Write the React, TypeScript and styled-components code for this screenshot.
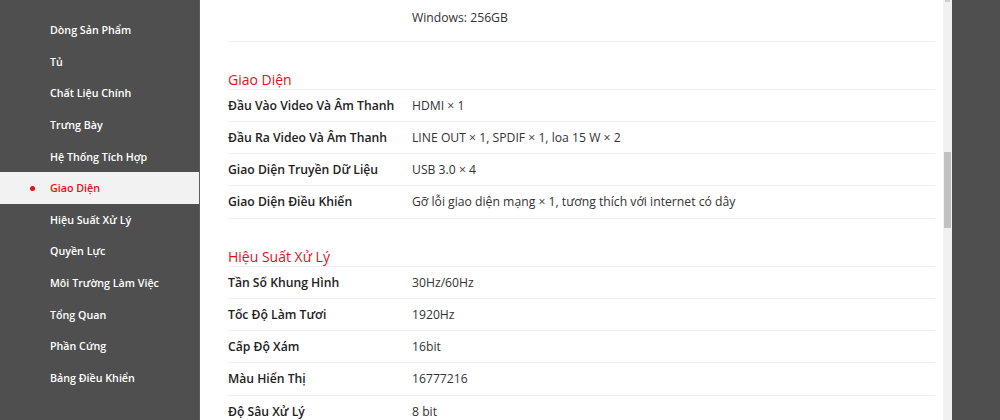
import styled, { createGlobalStyle } from "styled-components";

const GlobalStyle = createGlobalStyle`
    html, body {
        margin: 0;
        padding: 0;
        background: #4f4f4f;
        font-family: "Open Sans", "Noto Sans", sans-serif;
    }
    * {
        box-sizing: border-box;
    }
`;

const Page = styled.div`
    display: flex;
    width: 1000px;
    height: 420px;
    overflow: hidden;
    background: #4f4f4f;
`;

const Sidebar = styled.nav`
    width: 200px;
    flex-shrink: 0;
    display: flex;
    flex-direction: column;
    padding-top: 14.5px;
    background: #4f4f4f;
    border-right: 1px solid #5c5c5c;
`;

const NavItem = styled.div<{ $active?: boolean }>`
    position: relative;
    display: flex;
    align-items: center;
    height: 31.6px;
    padding-left: 50px;
    font-size: 10.7px;
    font-weight: 600;
    color: ${({ $active }) => ($active ? "#e3101b" : "#ffffff")};
    background: ${({ $active }) => ($active ? "#f2f2f2" : "transparent")};
    white-space: nowrap;
    &::before {
        content: "";
        display: ${({ $active }) => ($active ? "block" : "none")};
        position: absolute;
        left: 30px;
        top: 50%;
        width: 5px;
        height: 5px;
        margin-top: -2.5px;
        border-radius: 50%;
        background: #e3101b;
    }
`;

const Main = styled.main`
    width: 743px;
    flex-shrink: 0;
    background: #ffffff;
    padding: 0 8px 0 28px;
    overflow: hidden;
`;

const Section = styled.section`
    display: flex;
    flex-direction: column;
`;

const SectionTitle = styled.h3`
    margin: 0;
    padding-top: 28px;
    font-size: 14px;
    font-weight: 500;
    line-height: 19px;
    color: #e3101b;
    border-bottom: 1px solid #efefef;
`;

const Row = styled.div<{ $padTop?: number; $padBottom?: number }>`
    display: grid;
    grid-template-columns: 184px 1fr;
    padding-top: ${({ $padTop }) => $padTop ?? 6}px;
    padding-bottom: ${({ $padBottom }) => $padBottom ?? 5.75}px;
    border-bottom: 1px solid #efefef;
    font-size: 12.2px;
    line-height: 19.5px;
    white-space: nowrap;
`;

const Label = styled.div`
    font-weight: 600;
    color: #222222;
`;

const Value = styled.div`
    color: #333333;
`;

const ScrollTrack = styled.div`
    width: 9px;
    flex-shrink: 0;
    display: flex;
    flex-direction: column;
    background: #f1f1f1;
    padding: 0 1px;
    &::before {
        content: "";
        display: block;
        height: 2px;
        margin: 0 1px;
        background: #cfcfcf;
    }
`;

const ScrollThumb = styled.div`
    margin-top: 150px;
    height: 76px;
    background: #c1c1c1;
`;

const Gutter = styled.div`
    flex: 1;
    background: #4f4f4f;
`;

const navItems = [
    "Dòng Sản Phẩm",
    "Tủ",
    "Chất Liệu Chính",
    "Trưng Bày",
    "Hệ Thống Tích Hợp",
    "Giao Diện",
    "Hiệu Suất Xử Lý",
    "Quyền Lực",
    "Môi Trường Làm Việc",
    "Tổng Quan",
    "Phần Cứng",
    "Bảng Điều Khiển",
];

const sections: { title: string; rows: [string, string][] }[] = [
    {
        title: "Giao Diện",
        rows: [
            ["Đầu Vào Video Và Âm Thanh", "HDMI × 1"],
            ["Đầu Ra Video Và Âm Thanh", "LINE OUT × 1, SPDIF × 1, loa 15 W × 2"],
            ["Giao Diện Truyền Dữ Liệu", "USB 3.0 × 4"],
            ["Giao Diện Điều Khiển", "Gỡ lỗi giao diện mạng × 1, tương thích với internet có dây"],
        ],
    },
    {
        title: "Hiệu Suất Xử Lý",
        rows: [
            ["Tần Số Khung Hình", "30Hz/60Hz"],
            ["Tốc Độ Làm Tươi", "1920Hz"],
            ["Cấp Độ Xám", "16bit"],
            ["Màu Hiển Thị", "16777216"],
            ["Độ Sâu Xử Lý", "8 bit"],
        ],
    },
];

const App = () => {
    return (
        <>
            <GlobalStyle />
            <Page>
                <Sidebar>
                    {navItems.map((item) => (
                        <NavItem key={item} $active={item === "Giao Diện"}>
                            {item}
                        </NavItem>
                    ))}
                </Sidebar>
                <Main>
                    <Row $padTop={8} $padBottom={13}>
                        <Label />
                        <Value>Windows: 256GB</Value>
                    </Row>
                    {sections.map((s) => (
                        <Section key={s.title}>
                            <SectionTitle>{s.title}</SectionTitle>
                            {s.rows.map(([label, value]) => (
                                <Row key={label}>
                                    <Label>{label}</Label>
                                    <Value>{value}</Value>
                                </Row>
                            ))}
                        </Section>
                    ))}
                </Main>
                <ScrollTrack>
                    <ScrollThumb />
                </ScrollTrack>
                <Gutter />
            </Page>
        </>
    );
};

export default App;
